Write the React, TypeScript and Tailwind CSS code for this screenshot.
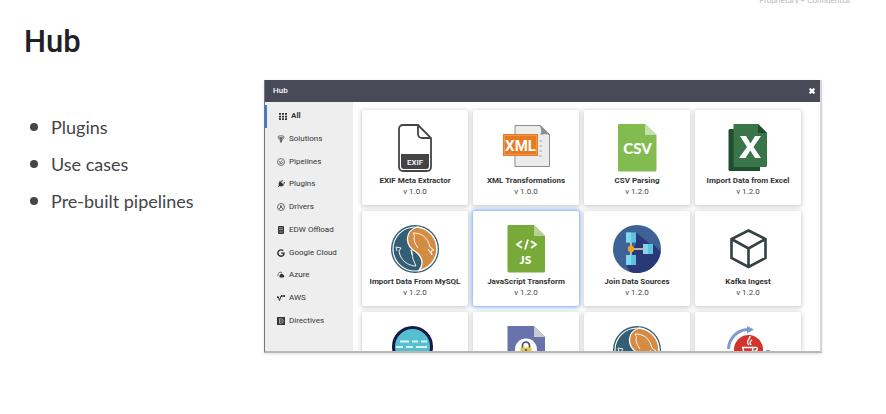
import type { ReactNode } from "react";
import { FaGoogle, FaPlug } from "react-icons/fa";

type NavItem = { label: string; icon: ReactNode; active?: boolean };
type HubItem = { title: string; version: string; icon: ReactNode; selected?: boolean };

const small = "h-2 w-2 shrink-0";
const art = "h-12 w-12 shrink-0";

const navItems: NavItem[] = [
  {
    label: "All",
    active: true,
    icon: (
      <svg viewBox="0 0 16 16" className={small} fill="currentColor" aria-hidden="true">
        <path d="M0 2h4v3.500H0zM6 2h4v3.500H6zM12 2h4v3.500h-4zM0 7.300h4v3.500H0zM6 7.300h4v3.500H6zM12 7.300h4v3.500h-4zM0 12.500h4V16H0zM6 12.500h4V16H6zM12 12.500h4V16h-4z" />
      </svg>
    ),
  },
  {
    label: "Solutions",
    icon: (
      <svg viewBox="0 0 16 16" className={small} fill="none" stroke="currentColor" strokeWidth="1.4" aria-hidden="true">
        <path d="M2 3.500C2 1 14 1 14 3.500C14 7 11 8 10 11H6C5 8 2 7 2 3.500zM5 4l2 5 1-5 1 5 2-5M6 13h4M7 15h2" />
      </svg>
    ),
  },
  {
    label: "Pipelines",
    icon: (
      <svg viewBox="0 0 16 16" className={small} fill="none" stroke="currentColor" strokeWidth="1.3" aria-hidden="true">
        <circle cx="8" cy="8" r="7" />
        <path d="M4 6l2 3 5-4M5 11h5l2-3" />
      </svg>
    ),
  },
  { label: "Plugins", icon: <FaPlug className="h-2 w-2 shrink-0 rotate-45" aria-hidden="true" /> },
  {
    label: "Drivers",
    icon: (
      <svg viewBox="0 0 16 16" className={small} fill="none" stroke="currentColor" strokeWidth="1.4" aria-hidden="true">
        <circle cx="8" cy="8" r="7" />
        <path d="M8 4v3M4 12l2-2M12 12l-2-2" />
        <circle cx="8" cy="8" r="1.5" fill="currentColor" />
      </svg>
    ),
  },
  {
    label: "EDW Offload",
    icon: (
      <svg viewBox="0 0 16 16" className={small} aria-hidden="true">
        <rect x="2" y="0" width="12" height="16" rx="2" fill="currentColor" />
        <path d="M4 3.500h8M4 7h8M4 12h8" stroke="#eeeeee" strokeWidth="1.1" />
      </svg>
    ),
  },
  { label: "Google Cloud", icon: <FaGoogle className={small} aria-hidden="true" /> },
  {
    label: "Azure",
    icon: (
      <svg viewBox="0 0 16 16" className={small} aria-hidden="true">
        <path d="M3 10a3 3 0 0 1 0-5 4 4 0 0 1 7-1" fill="none" stroke="currentColor" strokeWidth="1.4" />
        <path d="M6 13a3 3 0 0 1 0-5 3.500 3.500 0 0 1 6.500-.5A3 3 0 0 1 13 13z" fill="currentColor" />
      </svg>
    ),
  },
  {
    label: "AWS",
    icon: (
      <svg viewBox="0 0 16 16" className={small} aria-hidden="true">
        <path d="M0 6l3 1 2 6 3-9h3" fill="none" stroke="currentColor" strokeWidth="2" />
        <path d="M8 2h3v4H8zM12.500 2H16v4h-3.500zM0 5h4v3H0z" fill="currentColor" />
      </svg>
    ),
  },
  {
    label: "Directives",
    icon: (
      <svg viewBox="0 0 16 16" className={small} fill="none" aria-hidden="true">
        <rect width="16" height="16" rx="1" fill="currentColor" />
        <path d="M5 3.500h3a4.500 4.500 0 0 1 0 9H5z" stroke="#dddddd" strokeWidth="1.4" />
        <path d="M8 6v4" stroke="#dddddd" strokeWidth="1.2" />
      </svg>
    ),
  },
];

function ExifIcon() {
  return (
    <svg viewBox="0 0 48 48" className={art} aria-hidden="true">
      <path d="M12 1H27L40 14V43a4 4 0 0 1-4 4H12a4 4 0 0 1-4-4V5a4 4 0 0 1 4-4z" fill="#fff" stroke="#444446" strokeWidth="1.8" />
      <path d="M27 1V10a4 4 0 0 0 4 4h9" fill="none" stroke="#444446" strokeWidth="1.8" />
      <path d="M10 30h28v12a3 3 0 0 1-3 3H13a3 3 0 0 1-3-3z" fill="#444446" />
      <text x="24" y="41" textAnchor="middle" fontFamily="Roboto, sans-serif" fontSize="8" fontWeight="500" fill="#fff">EXIF</text>
    </svg>
  );
}

function XmlIcon() {
  return (
    <svg viewBox="0 0 48 48" className={art} aria-hidden="true">
      <path d="M13 1.500H38L47.500 11V42.500H13z" fill="#ececec" stroke="#8b8d8d" />
      <path d="M38 1.500c2 3 2 6 1 9 3-1 6-1 8.500 0z" fill="#8d9192" stroke="#777" strokeWidth=".6" />
      <path d="M37 17h3M37 22h3M37 27h3M37 32h3" stroke="#aaa" />
      <rect x="1" y="10" width="35" height="22" fill="#e67b22" />
      <rect x="2.500" y="11.500" width="32" height="19" fill="none" stroke="#f3a868" strokeWidth=".6" />
      <text x="18.500" y="26.500" textAnchor="middle" fontFamily="Roboto, sans-serif" fontSize="15" fontWeight="700" fill="#fff">XML</text>
    </svg>
  );
}

function CsvIcon() {
  return (
    <svg viewBox="0 0 48 48" className={art} aria-hidden="true">
      <path d="M6 0H32L43.500 11V46a1.500 1.500 0 0 1-1.500 1.500H6.500A1.500 1.500 0 0 1 5 46V1.500A1.500 1.500 0 0 1 6 0z" fill="#82bc50" />
      <path d="M32 0L43.500 11H32z" fill="#c5dfaa" />
      <text x="24.500" y="30" textAnchor="middle" fontFamily="Lato, sans-serif" fontSize="15" fontWeight="900" fill="#fff">CSV</text>
    </svg>
  );
}

function ExcelIcon() {
  return (
    <svg viewBox="0 0 48 48" className={art} aria-hidden="true">
      <path d="M6 5h30v42H6a1.500 1.500 0 0 1-1.500-1.500v-39A1.500 1.500 0 0 1 6 5z" fill="#1e4e2d" />
      <path d="M9.500 0H34l9 9v32.500a1.500 1.500 0 0 1-1.500 1.500H11a1.500 1.500 0 0 1-1.500-1.500z" fill="#397549" />
      <path d="M34 0l9 9H34z" fill="#1e4e2d" />
      <path d="M16 12h6l4.500 7.500L31 12h6l-7.500 11L37 34h-6l-4.700-7.500L21.500 34H15l8-11z" fill="#fff" />
    </svg>
  );
}

function MySqlIcon() {
  return (
    <svg viewBox="0 0 48 48" className={art} aria-hidden="true">
      <circle cx="24" cy="24" r="24" fill="#335e73" />
      <circle cx="24" cy="24" r="22" fill="#335e73" stroke="#fff" strokeWidth="1.2" />
      <path d="M26 2A22 22 0 0 1 28 45.500C33 39 32 33 25 27 13 20 14 6 26 2z" fill="#d48c43" stroke="#fff" strokeWidth="1.3" />
      <path d="M22 8c1 2 2 3 1 5 0 4 2 7 4 10M22 8c8 0 14 3 17 14l4 3-3 1 1 4-4-6" fill="none" stroke="#fff" strokeWidth=".9" />
      <path d="M5 22l5 1-2 3c1 9 9 15 17 15l-3-7c-1-4 0-6-2-9l1 5M5 22l1 4" fill="none" stroke="#fff" strokeWidth=".9" />
    </svg>
  );
}

function JsIcon() {
  return (
    <svg viewBox="0 0 48 48" className={art} aria-hidden="true">
      <path d="M7 0H32L43 11V46a1.500 1.500 0 0 1-1.500 1.500H7A1.500 1.500 0 0 1 5.500 46V1.500A1.500 1.500 0 0 1 7 0z" fill="#78aa3a" />
      <path d="M32 0L43 11H32z" fill="#b4d392" />
      <path d="M20 16l-5 3.500 5 3.500M29 16l5 3.500-5 3.500M26 14.500L23 24.500" fill="none" stroke="#fff" strokeWidth="1.8" />
      <text x="23.500" y="39" textAnchor="middle" fontFamily="Lato, sans-serif" fontSize="12" fontWeight="900" fill="#fff">JS</text>
    </svg>
  );
}

function JoinIcon() {
  return (
    <svg viewBox="0 0 48 48" className={art} aria-hidden="true">
      <circle cx="24" cy="24" r="24" fill="#3e6196" />
      <path d="M23 7.500L37 19h3l7.600 7.500A24 24 0 0 1 17 47l-4-7 10-22z" fill="#293977" />
      <path d="M18 12v24M18 24h16" stroke="#f0dca7" strokeWidth="1.4" />
      <path d="M13 7.500h10v10H13zM30 19h10v10H30zM13 30h10v10H13z" fill="#5dc3de" />
      <path d="M13 7.500h5v10h-5zM30 19h5v10h-5zM13 30h5v10h-5z" fill="#83d5e9" />
      <circle cx="18" cy="24" r="3.2" fill="#e9a52b" />
    </svg>
  );
}

function CubeIcon() {
  return (
    <svg viewBox="0 0 48 48" className={art} fill="none" stroke="#354043" strokeWidth="2.6" aria-hidden="true">
      <path d="M24.500 5.500L41.500 14v19L24.500 42 7.500 33V14zM7.500 14l17 9.500 17-9.500M24.500 23.500V42" />
    </svg>
  );
}

function FirewallIcon() {
  return (
    <svg viewBox="0 0 48 48" className={art} aria-hidden="true">
      <circle cx="21.500" cy="20.500" r="19" fill="#55bfd0" stroke="#15184a" strokeWidth="3" />
      <path d="M9 15.500h9M21 15.500h6M30 15.500h6M5 21h7M15 21h7M25 21h11M9 26.500h10M22 26.500h6M31 26.500h6" stroke="#d9f5f7" strokeWidth="2.2" />
    </svg>
  );
}

function LockDocIcon() {
  return (
    <svg viewBox="0 0 48 48" className={art} aria-hidden="true">
      <path d="M5.500 0H32l11 11v37H5.500z" fill="#6773aa" />
      <path d="M32 0l11 11H32z" fill="#c9cccc" />
      <circle cx="24" cy="23.500" r="11" fill="#fff" />
      <path d="M20.500 23v-3.500a3.500 3.500 0 0 1 7 0V23" fill="none" stroke="#454e61" strokeWidth="1.7" />
      <rect x="18.500" y="21.500" width="11" height="9" fill="#e8c440" />
      <path d="M24 23v3" stroke="#454e61" strokeWidth="1.5" />
    </svg>
  );
}

function JavaIcon() {
  return (
    <svg viewBox="0 0 48 48" className={art} aria-hidden="true">
      <circle cx="24.500" cy="23.500" r="14.500" fill="#d2352e" />
      <path d="M4.500 23A20 20 0 0 1 23 3.500" fill="none" stroke="#7b9bd0" strokeWidth="3" />
      <path d="M23 0l7 3.500-7 4zM42 24h4l-2 6z" fill="#7b9bd0" />
      <path d="M26 10c0 4-5 5-1 9M28 14c-3 2-2 3-1 5" fill="none" stroke="#fff" strokeWidth="1.4" />
      <path d="M18 21.500h12c5-1 4 4-1 4M19 22l1 5h8l1-5" fill="none" stroke="#fff" strokeWidth="1.4" />
    </svg>
  );
}

const hubItems: HubItem[] = [
  { title: "EXIF Meta Extractor", version: "v 1.0.0", icon: <ExifIcon /> },
  { title: "XML Transformations", version: "v 1.0.0", icon: <XmlIcon /> },
  { title: "CSV Parsing", version: "v 1.2.0", icon: <CsvIcon /> },
  { title: "Import Data from Excel", version: "v 1.2.0", icon: <ExcelIcon /> },
  { title: "Import Data From MySQL", version: "v 1.2.0", icon: <MySqlIcon /> },
  { title: "JavaScript Transform", version: "v 1.2.0", icon: <JsIcon />, selected: true },
  { title: "Join Data Sources", version: "v 1.2.0", icon: <JoinIcon /> },
  { title: "Kafka Ingest", version: "v 1.2.0", icon: <CubeIcon /> },
];

const partialItems: { name: string; icon: ReactNode }[] = [
  { name: "firewall", icon: <FirewallIcon /> },
  { name: "lock", icon: <LockDocIcon /> },
  { name: "mysql", icon: <MySqlIcon /> },
  { name: "java", icon: <JavaIcon /> },
];

const card = "flex h-[95px] w-full flex-col items-center rounded-xs bg-white pt-3.5";

function HubCard({ item }: { item: HubItem }) {
  return (
    <li>
      <button
        type="button"
        className={`${card} ${item.selected ? "shadow-[0_0_4px_1px_#6c9ff0]" : "shadow-[0_1px_4px_1px_#d0d0d0]"}`}
      >
        {item.icon}
        <span className="mt-0.5 text-[8px] leading-[14px] font-bold whitespace-nowrap text-[#333333]">{item.title}</span>
        <span className="text-[8px] leading-2 text-[#444444]">{item.version}</span>
      </button>
    </li>
  );
}

export default function App() {
  return (
    <div className="min-h-screen bg-white font-['Lato',sans-serif]">
      <div className="flex h-1 items-end justify-end overflow-hidden pr-9">
        <span className="text-[8px] leading-2 text-[#b4b7ba]">Proprietary + Confidential</span>
      </div>
      <main className="flex items-start pr-16">
        <section className="w-66 shrink-0 pt-[18px] pl-6">
          <h1 className="font-['Roboto',sans-serif] text-[31px] leading-10 font-medium text-[#202124]">Hub</h1>
          <ul className="mt-[46px] flex flex-col text-lg text-[#434548]">
            {["Plugins", "Use cases", "Pre-built pipelines"].map((text) => (
              <li key={text} className="flex h-[37px] items-center gap-[13px] pl-1.5">
                <span className="h-2 w-2 rounded-full bg-[#434548]" />
                {text}
              </li>
            ))}
          </ul>
        </section>

        <section
          aria-label="Hub"
          className="mt-19 flex h-[273px] min-w-0 flex-1 flex-col overflow-hidden border-r-2 border-b-2 border-l border-r-[#d6d6d6] border-b-[#b8b8b8] border-l-[#777777] bg-white font-['Roboto',sans-serif] shadow-sm"
        >
          <header className="flex h-[22px] shrink-0 items-center justify-between bg-[#484a58] pr-[3px] pl-2 text-white">
            <h2 className="text-[8px] leading-3 font-medium">Hub</h2>
            <button type="button" aria-label="Close" className="p-0.5">
              <svg viewBox="0 0 10 10" className="h-1.5 w-1.5" stroke="currentColor" strokeWidth="3.6" aria-hidden="true">
                <path d="M1 1l8 8M9 1L1 9" />
              </svg>
            </button>
          </header>
          <div className="flex min-h-0 flex-1">
            <nav aria-label="Categories" className="w-[88px] shrink-0 bg-[#eeeeee] pt-[3px]">
              <ul className="flex h-[227px] flex-col">
                {navItems.map((item) => (
                  <li key={item.label} className="flex flex-1">
                    <a
                      href="#"
                      className={
                        item.active
                          ? "flex w-full items-center gap-1 border-l-2 border-[#3b78e7] pl-3 text-[8px] font-bold text-[#333333]"
                          : "flex w-full items-center gap-1 pl-3 text-[8px] text-[#333333]"
                      }
                    >
                      {item.icon}
                      {item.label}
                    </a>
                  </li>
                ))}
              </ul>
            </nav>
            <ul className="grid flex-1 auto-rows-max grid-cols-4 gap-x-[5px] gap-y-1.5 pt-2 pr-[19px] pl-[9px]">
              {hubItems.map((item) => (
                <HubCard key={item.title} item={item} />
              ))}
              {partialItems.map((item) => (
                <li key={item.name}>
                  <button type="button" aria-label={item.name} className={`${card} shadow-[0_1px_4px_1px_#d0d0d0]`}>
                    {item.icon}
                  </button>
                </li>
              ))}
            </ul>
          </div>
        </section>
      </main>
    </div>
  );
}
